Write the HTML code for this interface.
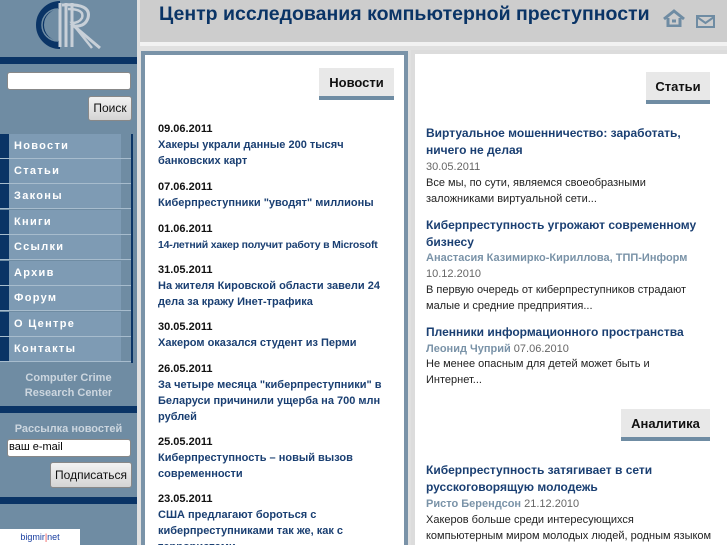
<!DOCTYPE html>
<html><head><meta charset="utf-8"><style>
*{margin:0;padding:0;box-sizing:border-box}
html{overflow:hidden;width:727px;height:545px}
body{width:727px;height:545px;overflow:hidden;background:#e0e0e0;font-family:"Liberation Sans","DejaVu Sans",sans-serif;position:relative}
.a{position:absolute;white-space:nowrap}
#side{left:0;top:0;width:137px;height:545px;background:#6f8ca3}
.bar{left:0;width:137px;height:7px;background:#0a3466}
.menu{left:0;width:131px;height:25px;background:#7e9bb4;border-bottom:1px solid #a7bccd}
.menu:before{content:"";position:absolute;left:0;top:0;width:9px;height:100%;background:#0a3466}
.menu:after{content:"";position:absolute;right:0;top:0;width:10px;height:100%;background:#6f8ca3}
.menu span{position:absolute;left:14px;top:6px;color:#fff;font-weight:bold;font-size:11px;letter-spacing:1.3px}
.inp{background:#fff;border:1px solid #888;border-radius:3px}
.btn{background:linear-gradient(#f2f2f2,#d4d4d4);border:1px solid #888;border-radius:3px;font-size:12px;color:#111;text-align:center}
.d{font-size:11px;font-weight:bold;color:#111;left:158px}
.t{font-size:11px;font-weight:bold;color:#1a3f72;left:158px;line-height:16px}
.rt{font-size:12px;font-weight:bold;color:#1a3f72;left:426px;line-height:17px}
.rd{font-size:11px;color:#666;left:426px}
.rx{font-size:11px;color:#222;left:426px;line-height:16px}
.tab{background:#e8e8e8;border-bottom:4px solid #6f8ca3;font-size:13px;font-weight:bold;color:#111;text-align:center}
</style></head><body>
<div class="a" id="side"></div>
<svg class="a" style="left:30px;top:0" width="80" height="50" viewBox="0 0 80 50">
<path d="M30 5 A20 20 0 1 0 30 45" fill="none" stroke="#0a3466" stroke-width="8"/>
<path d="M28 9 A16 16 0 1 0 28 41" fill="none" stroke="#6f8ca3" stroke-width="1.5"/>
<path d="M30 3 L30 47 M36 3 L36 47 M42 3 L42 47" stroke="#c8d0d8" stroke-width="3"/>
<path d="M32 5 Q62 3 58 18 Q55 27 44 26 L70 48" fill="none" stroke="#c8d0d8" stroke-width="3"/>
<path d="M38 9 Q55 9 52 18 Q49 23 42 23 L62 48" fill="none" stroke="#c8d0d8" stroke-width="2.5"/>
</svg>
<div class="a bar" style="top:57px"></div>
<div class="a inp" style="left:7px;top:72px;width:124px;height:18px"></div>
<div class="a btn" style="left:88px;top:96px;width:44px;height:25px;line-height:23px">Поиск</div>
<div class="a" style="left:131px;top:134px;width:2px;height:229px;background:#0a3466"></div>
<div class="a menu" style="top:134px"><span>Новости</span></div>
<div class="a menu" style="top:159px"><span>Статьи</span></div>
<div class="a menu" style="top:184px"><span>Законы</span></div>
<div class="a menu" style="top:210px"><span>Книги</span></div>
<div class="a menu" style="top:235px"><span>Ссылки</span></div>
<div class="a menu" style="top:261px"><span>Архив</span></div>
<div class="a menu" style="top:286px"><span>Форум</span></div>
<div class="a menu" style="top:312px"><span>О Центре</span></div>
<div class="a menu" style="top:337px"><span>Контакты</span></div>
<div class="a" style="left:0;top:371px;width:137px;text-align:center;color:#ccd6df;font-weight:bold;font-size:11px;line-height:15px">Computer Crime<br>Research Center</div>
<div class="a bar" style="top:406px"></div>
<div class="a" style="left:0;top:423px;width:137px;text-align:center;color:#ccd6df;font-weight:bold;font-size:11px">Рассылка новостей</div>
<div class="a inp" style="left:7px;top:439px;width:124px;height:18px;font-size:11px;padding:1px 1px">ваш e-mail</div>
<div class="a btn" style="left:50px;top:462px;width:82px;height:26px;line-height:24px">Подписаться</div>
<div class="a bar" style="top:497px"></div>
<div class="a" style="left:0;top:529px;width:80px;height:16px;background:#fff;font-size:9px;color:#1a3fa0;text-align:center;line-height:16px">bigmir<span style="color:#e44">|</span>net</div>

<div class="a" style="left:140px;top:0;width:587px;height:42px;background:#cdcdcd"></div>
<div class="a" style="left:140px;top:42px;width:587px;height:4px;background:#f2f2f2"></div>
<div class="a" style="left:159px;top:3px;font-size:19.5px;font-weight:bold;color:#0a3466">Центр исследования компьютерной преступности</div>
<svg class="a" style="left:663px;top:9px" width="22" height="18" viewBox="0 0 22 18"><path d="M1 10 L11 2 L21 10" fill="none" stroke="#6f8ca3" stroke-width="3"/><path d="M5 9 V17 H17 V9 M9 12 H13" fill="none" stroke="#6f8ca3" stroke-width="3"/></svg>
<svg class="a" style="left:696px;top:15px" width="19" height="13" viewBox="0 0 19 13"><rect x="1" y="1" width="17" height="11" fill="none" stroke="#6f8ca3" stroke-width="2"/><path d="M1 2 L9.5 8 L18 2" fill="none" stroke="#6f8ca3" stroke-width="2"/></svg>

<div class="a" style="left:141px;top:51px;width:267px;height:494px;background:#fff;border:4px solid #7a93a8;border-bottom:none"></div>
<div class="a" style="left:411px;top:50px;width:316px;height:495px;background:#fff;border:4px solid #dcdcdc;border-right:none;border-bottom:none"></div>

<div class="a tab" style="left:319px;top:68px;width:75px;height:32px;line-height:30px">Новости</div>
<div class="a d" style="top:123px">09.06.2011</div>
<div class="a t" style="top:137px">Хакеры украли данные 200 тысяч<br>банковских карт</div>
<div class="a d" style="top:181px">07.06.2011</div>
<div class="a t" style="top:195px">Киберпреступники "уводят" миллионы</div>
<div class="a d" style="top:223px">01.06.2011</div>
<div class="a t" style="top:237px;font-size:10.5px;letter-spacing:-0.2px">14-летний хакер получит работу в Microsoft</div>
<div class="a d" style="top:264px">31.05.2011</div>
<div class="a t" style="top:278px">На жителя Кировской области завели 24<br>дела за кражу Инет-трафика</div>
<div class="a d" style="top:321px">30.05.2011</div>
<div class="a t" style="top:335px">Хакером оказался студент из Перми</div>
<div class="a d" style="top:363px">26.05.2011</div>
<div class="a t" style="top:377px">За четыре месяца "киберпреступники" в<br>Беларуси причинили ущерба на 700 млн<br>рублей</div>
<div class="a d" style="top:436px">25.05.2011</div>
<div class="a t" style="top:450px">Киберпреступность – новый вызов<br>современности</div>
<div class="a d" style="top:493px">23.05.2011</div>
<div class="a t" style="top:507px">США предлагают бороться с<br>киберпреступниками так же, как с<br>террористами</div>

<div class="a tab" style="left:646px;top:72px;width:64px;height:32px;line-height:30px">Статьи</div>
<div class="a rt" style="top:125px">Виртуальное мошенничество: заработать,<br>ничего не делая</div>
<div class="a rd" style="top:161px">30.05.2011</div>
<div class="a rx" style="top:175px">Все мы, по сути, являемся своеобразными<br>заложниками виртуальной сети...</div>
<div class="a rt" style="top:217px">Киберпреступность угрожают современному<br>бизнесу</div>
<div class="a rd" style="top:252px;width:295px;overflow:hidden"><b style="color:#7a93a8">Анастасия Казимирко-Кириллова, ТПП-Информ</b></div>
<div class="a rd" style="top:268px">10.12.2010</div>
<div class="a rx" style="top:282px">В первую очередь от киберпреступников страдают<br>малые и средние предприятия...</div>
<div class="a rt" style="top:324px">Пленники информационного пространства</div>
<div class="a rd" style="top:343px"><b style="color:#7a93a8">Леонид Чуприй</b> 07.06.2010</div>
<div class="a rx" style="top:356px">Не менее опасным для детей может быть и<br>Интернет...</div>
<div class="a tab" style="left:621px;top:409px;width:89px;height:32px;line-height:30px">Аналитика</div>
<div class="a rt" style="top:462px">Киберпреступность затягивает в сети<br>русскоговорящую молодежь</div>
<div class="a rd" style="top:498px"><b style="color:#7a93a8">Ристо Берендсон</b> 21.12.2010</div>
<div class="a rx" style="top:512px">Хакеров больше среди интересующихся<br>компьютерным миром молодых людей, родным языком</div>
</body></html>
